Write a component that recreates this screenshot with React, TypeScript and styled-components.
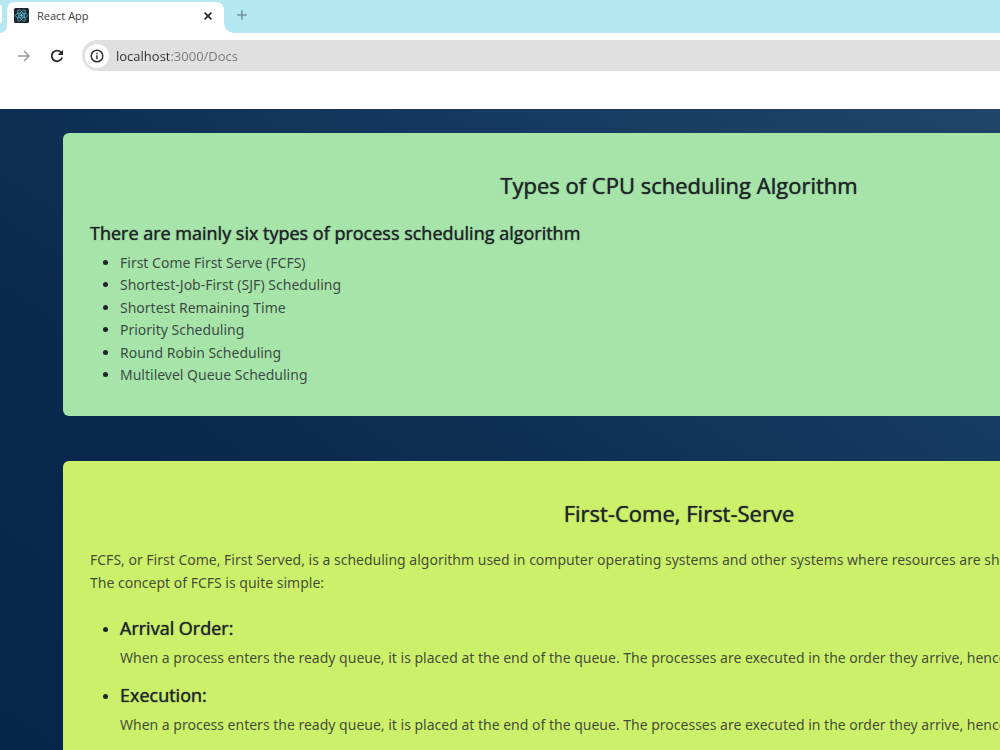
import React from "react";
import styled, { createGlobalStyle } from "styled-components";

const GlobalStyle = createGlobalStyle`
  *, *::before, *::after { box-sizing: border-box; }
  body {
    margin: 0;
    overflow: hidden;
    font-family: "Noto Sans", "Open Sans", sans-serif;
    color: #212529;
    background: #ffffff;
  }
  button { border: 0; padding: 0; background: none; font: inherit; color: inherit; }
`;

const Window = styled.div`
  display: flex;
  flex-direction: column;
  height: 100vh;
  overflow: hidden;
`;

const TabStrip = styled.div`
  display: flex;
  height: 33px;
  background: #b5e8f3;
`;

const PreviousTab = styled.div`
  width: 7px;
  background: #ffffff;
`;

const PreviousTabEdge = styled.div`
  height: 100%;
  background: #b5e8f3;
  border-bottom-right-radius: 7px;
  position: relative;
  &::before {
    content: "";
    position: absolute;
    left: 0;
    top: 5px;
    width: 2px;
    height: 18px;
    background: #ffffff;
    border-radius: 0 2px 2px 0;
  }
`;

const Tab = styled.div`
  display: flex;
  align-items: center;
  width: 217px;
  margin-top: 2px;
  padding: 0 11px 4px 7px;
  background: #ffffff;
  border-radius: 8px 8px 0 0;
`;

const TabTitle = styled.span`
  flex: 1;
  margin-left: 8px;
  font: 11px/16px "Open Sans", sans-serif;
  color: #3a3d40;
`;

const IconButton = styled.button<{ $size: number }>`
  display: grid;
  place-items: center;
  flex: none;
  width: ${(p) => p.$size}px;
  height: ${(p) => p.$size}px;
`;

const AfterTab = styled.div`
  flex: 1;
  background: #ffffff;
`;

const StripRest = styled.div`
  display: flex;
  align-items: center;
  height: 100%;
  padding: 0 0 3px 10px;
  background: #b5e8f3;
  border-bottom-left-radius: 10px;
`;

const Toolbar = styled.div`
  display: flex;
  align-items: center;
  height: 76px;
  padding: 0 0 31px 16px;
  gap: 16px;
`;

const AddressBar = styled.form`
  display: flex;
  align-items: center;
  flex: 1;
  height: 31px;
  gap: 7px;
  padding-left: 3px;
  background: #e0e0e0;
  border-radius: 16px 0 0 16px;
`;

const SiteInfo = styled(IconButton)`
  border-radius: 50%;
  background: #ffffff;
`;

const Address = styled.input`
  flex: 1;
  height: 24px;
  padding: 0;
  border: 0;
  outline: 0;
  font: 13px/24px "Open Sans", sans-serif;
  color: transparent;
  background: linear-gradient(to right, #2b2d30 53px, #74777a 53px);
  background-clip: text;
  -webkit-background-clip: text;
`;

const Viewport = styled.div`
  flex: 1;
  min-height: 0;
  overflow: hidden;
  background: linear-gradient(35deg, #07244a 0%, #0b2a4e 38%, #143860 70%, #1e4669 100%);
`;

const Page = styled.main`
  display: flex;
  flex-direction: column;
  gap: 45px;
  min-width: 1358px;
  padding: 24px 63px;
`;

const Card = styled.section<{ $color: string }>`
  padding: 37px 27px 30px;
  background: ${(p) => p.$color};
  border-radius: 6px;
`;

const CardTitle = styled.h2`
  margin: 0 0 21px;
  font-family: "Open Sans", sans-serif;
  font-size: 22px;
  font-weight: 500;
  line-height: 30px;
  text-align: center;
  text-shadow: 0 0 1px #212529;
`;

const Subtitle = styled.h3`
  margin: 0 0 7px;
  font-family: "Open Sans", sans-serif;
  font-size: 18px;
  font-weight: 500;
  line-height: 24px;
  text-shadow: 0 0 1px #212529;
`;

const List = styled.ul<{ $spaced?: boolean }>`
  display: flex;
  flex-direction: column;
  gap: ${(p) => (p.$spaced ? 13 : 0)}px;
  margin: 0;
  padding-left: 30px;
  font-size: 14px;
  line-height: 1.6;
`;

const Label = styled.span`
  color: rgba(33, 37, 41, 0.82);
`;

const Text = styled.p`
  margin: 0;
  font-size: 14px;
  line-height: 1.6;
  color: rgba(33, 37, 41, 0.82);
`;

const Intro = styled(Text)`
  margin-bottom: 22px;
`;

const algorithms = [
  "First Come First Serve (FCFS)",
  "Shortest-Job-First (SJF) Scheduling",
  "Shortest Remaining Time",
  "Priority Scheduling",
  "Round Robin Scheduling",
  "Multilevel Queue Scheduling",
];

const steps = ["Arrival Order:", "Execution:"];

const ReactLogo = () => (
  <svg width="15" height="15" viewBox="0 0 30 30" aria-hidden="true">
    <rect width="30" height="30" rx="3" fill="#20252b" />
    <g fill="none" stroke="#4fb9d3" strokeWidth="1.6">
      <ellipse cx="15" cy="15" rx="12.5" ry="4.8" />
      <ellipse cx="15" cy="15" rx="12.5" ry="4.8" transform="rotate(60 15 15)" />
      <ellipse cx="15" cy="15" rx="12.5" ry="4.8" transform="rotate(120 15 15)" />
    </g>
    <circle cx="15" cy="15" r="2.4" fill="#61dafb" />
  </svg>
);

export default function App() {
  return (
    <Window>
      <GlobalStyle />
      <TabStrip>
        <PreviousTab><PreviousTabEdge /></PreviousTab>
        <Tab>
          <ReactLogo />
          <TabTitle>React App</TabTitle>
          <IconButton $size={10} aria-label="Close tab">
            <svg width="10" height="10" viewBox="0 0 10 10" stroke="#27292c" strokeWidth="1.7">
              <path d="M1.6 1.6L8.4 8.4M8.4 1.6L1.6 8.4" />
            </svg>
          </IconButton>
        </Tab>
        <AfterTab>
          <StripRest>
            <IconButton $size={16} aria-label="New tab">
              <svg width="12" height="12" viewBox="0 0 12 12" stroke="#719299" strokeWidth="1.5">
                <path d="M6 1.2V10.8M1.2 6H10.8" />
              </svg>
            </IconButton>
          </StripRest>
        </AfterTab>
      </TabStrip>
      <Toolbar>
        <IconButton $size={16} aria-label="Forward">
          <svg width="14" height="14" viewBox="0 0 14 14" fill="none" stroke="#999999" strokeWidth="1.4">
            <path d="M1 7H12M7 2L12 7L7 12" />
          </svg>
        </IconButton>
        <IconButton $size={18} aria-label="Reload">
          <svg width="16" height="16" viewBox="0 0 16 16" fill="none" stroke="#27292c" strokeWidth="1.8">
            <path d="M13.1 9.4A5.3 5.3 0 1 1 12 4.4L13 5.6" />
            <path d="M14 1.8V7H8.8Z" fill="#27292c" stroke="none" />
          </svg>
        </IconButton>
        <AddressBar>
          <SiteInfo type="button" $size={24} aria-label="Site information">
            <svg width="14" height="14" viewBox="0 0 14 14" fill="none" stroke="#303235" strokeWidth="1.5">
              <circle cx="7" cy="7" r="5.8" />
              <path d="M7 6.3V10.2M7 3.7V5.2" />
            </svg>
          </SiteInfo>
          <Address aria-label="Address" defaultValue="localhost:3000/Docs" />
        </AddressBar>
      </Toolbar>
      <Viewport>
        <Page>
          <Card $color="#a6e4a9">
            <CardTitle>Types of CPU scheduling Algorithm</CardTitle>
            <Subtitle>There are mainly six types of process scheduling algorithm</Subtitle>
            <List>
              {algorithms.map((name) => (
                <li key={name}><Label>{name}</Label></li>
              ))}
            </List>
          </Card>
          <Card $color="#cdf06b">
            <CardTitle>First-Come, First-Serve</CardTitle>
            <Intro>
              FCFS, or First Come, First Served, is a scheduling algorithm used in computer operating systems and other systems where resources are shared.
              <br />
              The concept of FCFS is quite simple:
            </Intro>
            <List $spaced>
              {steps.map((step) => (
                <li key={step}>
                  <Subtitle>{step}</Subtitle>
                  <Text>
                    When a process enters the ready queue, it is placed at the end of the queue. The processes are executed in the order they arrive, hence
                  </Text>
                </li>
              ))}
            </List>
          </Card>
        </Page>
      </Viewport>
    </Window>
  );
}
